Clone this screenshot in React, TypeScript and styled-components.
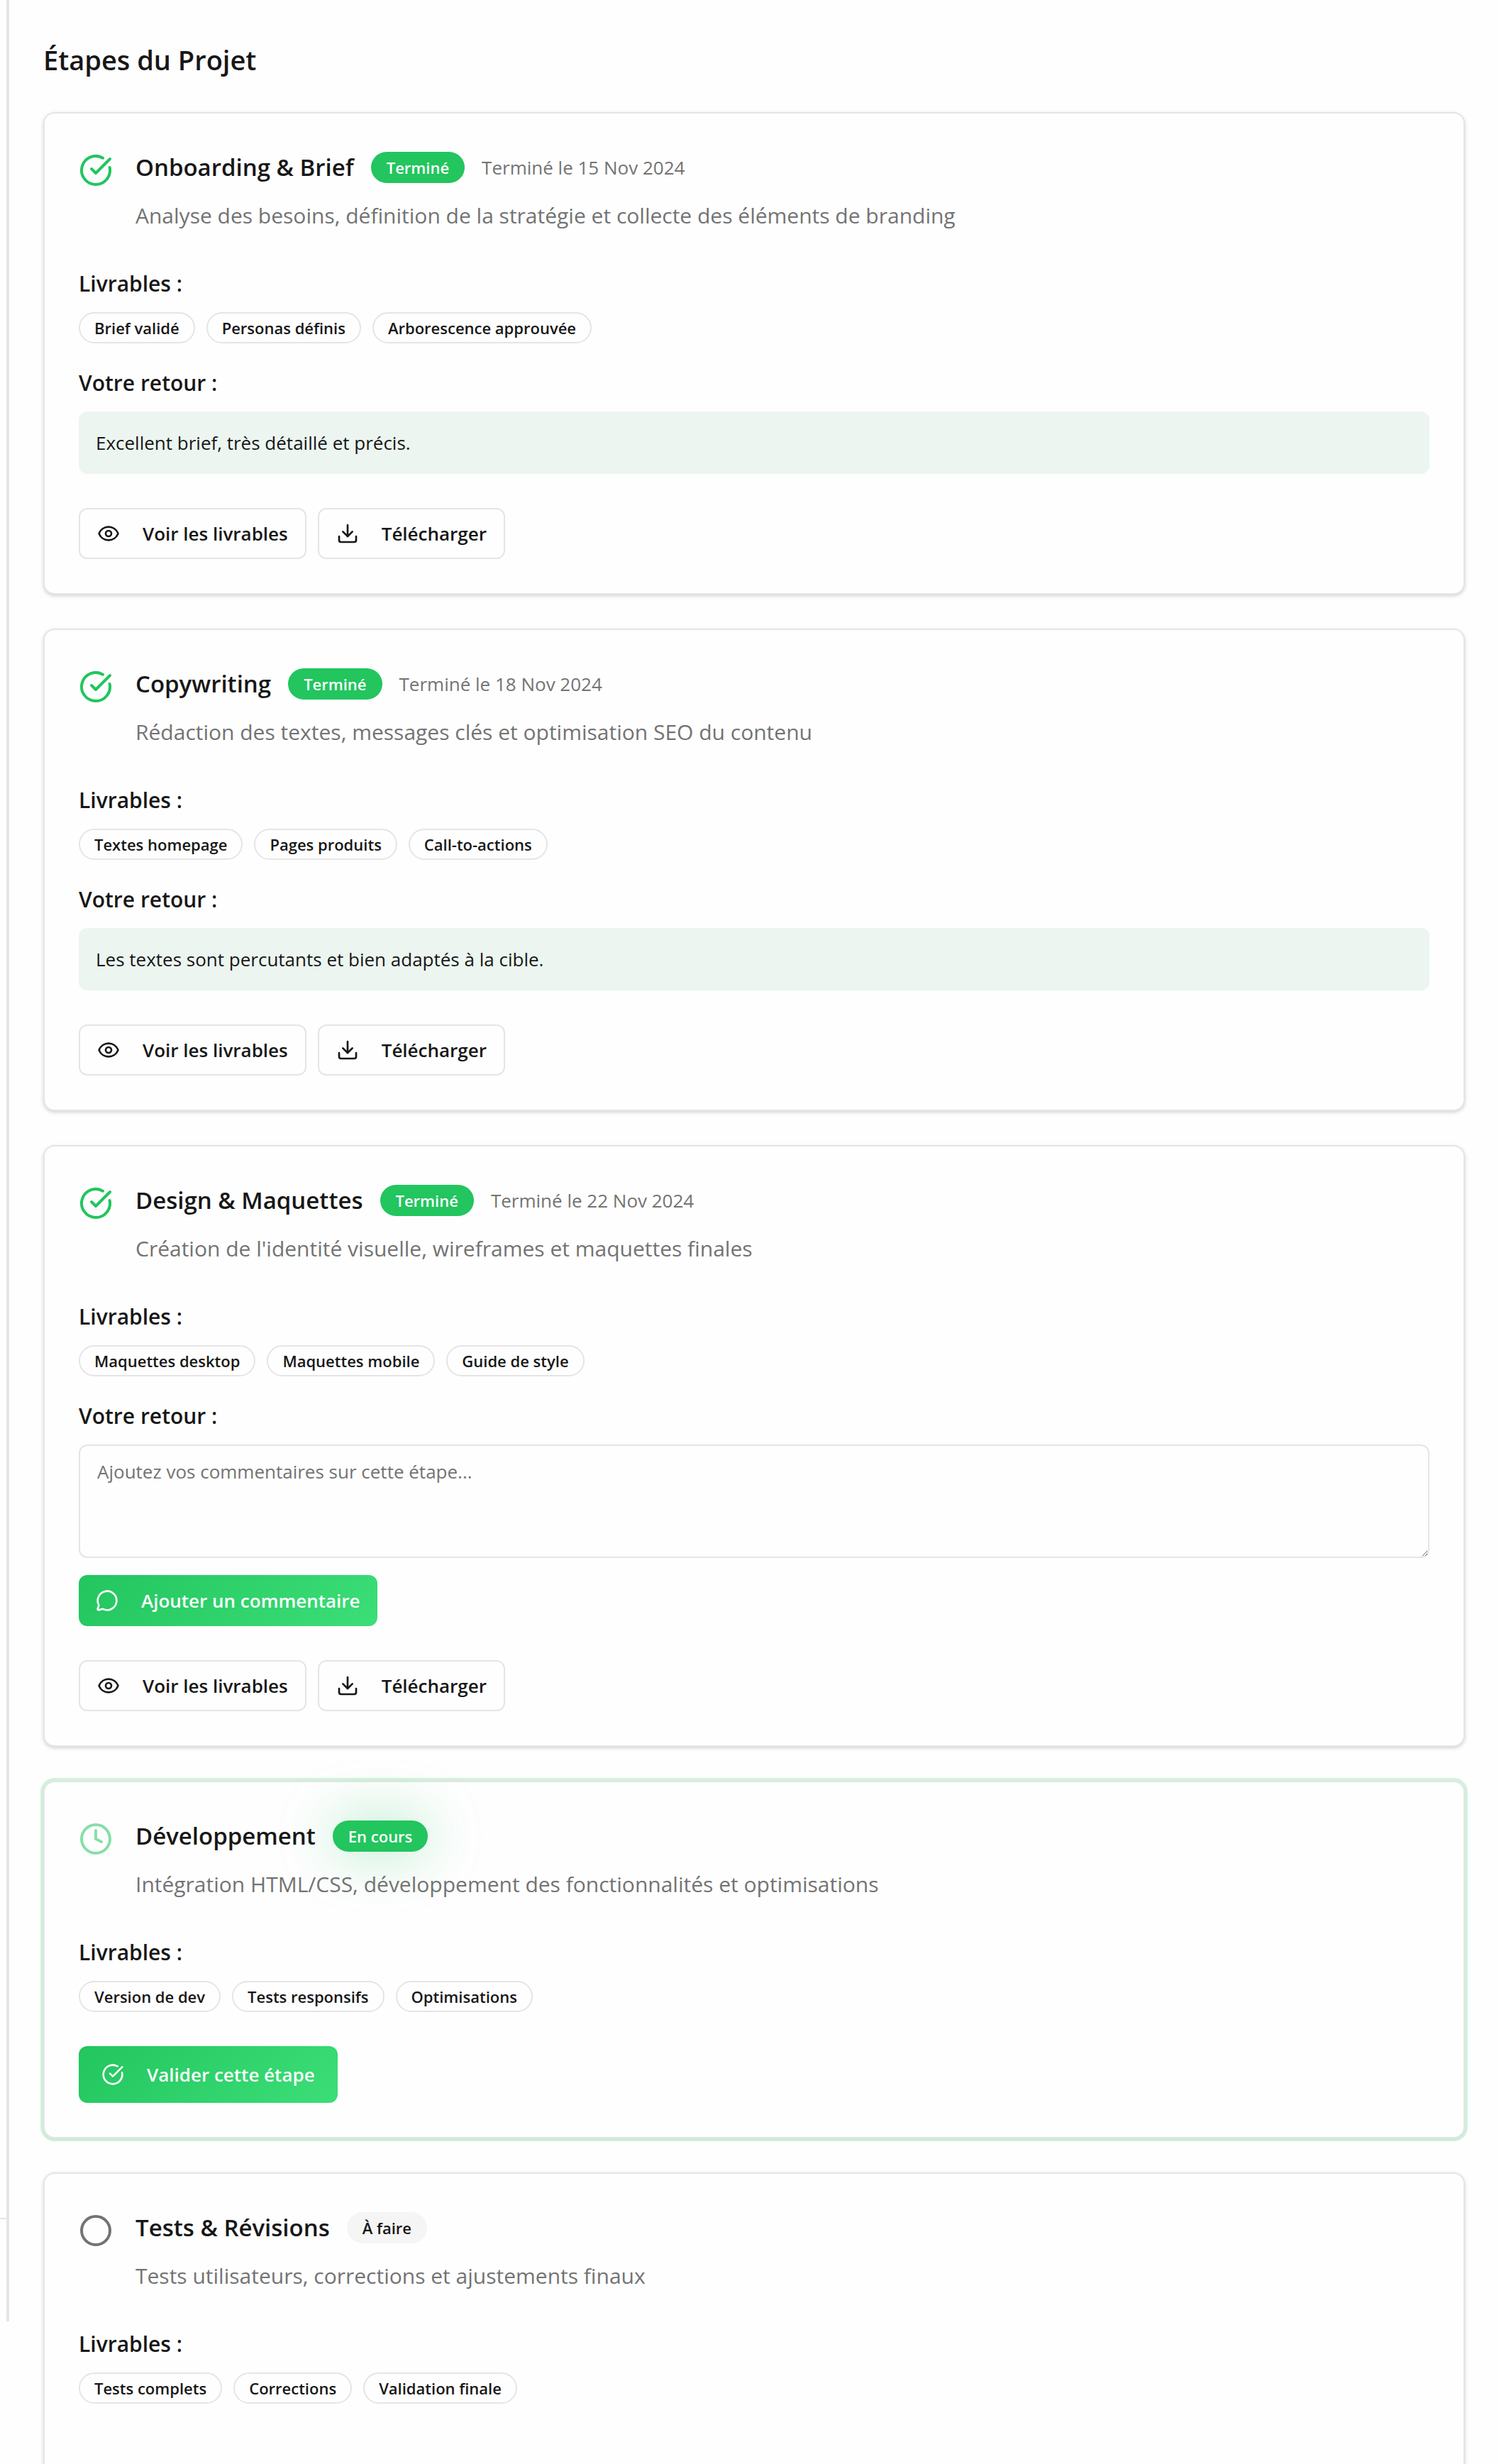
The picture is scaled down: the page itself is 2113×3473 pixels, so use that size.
import React, { useId } from "react";
import styled, { createGlobalStyle, css } from "styled-components";
import { Circle, CircleCheckBig, Clock, Download, Eye, MessageCircle } from "lucide-react";

const GlobalStyle = createGlobalStyle`
  *, *::before, *::after { box-sizing: border-box; }
  body {
    margin: 0;
    background: #fefefe;
    color: #171717;
    font-family: "Segoe UI", "Open Sans", "Noto Sans", sans-serif;
    font-size: 30px;
    line-height: 48px;
  }
  h2, h3, h4, p, ul { margin: 0; padding: 0; }
  button, textarea { font-family: inherit; }
`;

const Shell = styled.div`
  display: flex;
  height: 100vh;
  overflow-y: auto;
  scrollbar-width: none;
`;

const Sidebar = styled.aside`
  display: flex;
  flex-direction: column;
  justify-content: flex-end;
  flex: none;
  width: 13px;
  height: calc(100% - 201px);
  border-right: 4px solid #e5e5e5;
`;

const SidebarFooter = styled.div`
  height: 146px;
  border-top: 2px solid #e5e5e5;
`;

const Main = styled.main`
  flex: 1;
  min-width: 0;
  padding: 56px 48px 48px;
`;

const PageTitle = styled.h2`
  margin-bottom: 46px;
  font-size: 38px;
  font-weight: 600;
  line-height: 56px;
`;

const StepList = styled.div`
  display: flex;
  flex-direction: column;
  gap: 48px;
  padding-bottom: 48px;
`;

const Card = styled.article<{ $active: boolean }>`
  padding: 48px;
  border: 2px solid #e5e5e5;
  border-radius: 16px;
  background: #fefefe;
  box-shadow: ${(p) =>
    p.$active
      ? "0 0 0 4px rgba(34, 197, 94, 0.2), 0 2px 4px rgba(0, 0, 0, 0.05)"
      : "0 2px 6px rgba(0, 0, 0, 0.1), 0 2px 4px rgba(0, 0, 0, 0.08)"};
`;

const CardHeader = styled.header`
  display: flex;
  align-items: flex-start;
  gap: 32px;
  margin-bottom: 48px;
`;

const StatusIcon = styled.span<{ $color: string }>`
  display: flex;
  padding-top: 8px;
  color: ${(p) => p.$color};
`;

const TitleRow = styled.div`
  display: flex;
  align-items: center;
  gap: 24px;
  margin-bottom: 16px;
`;

const StepTitle = styled.h3`
  font-size: 33px;
  font-weight: 600;
  line-height: 56px;
`;

const StepDate = styled.span`
  color: #737373;
  font-size: 26px;
  line-height: 40px;
`;

const Description = styled.p`
  color: #737373;
`;

const pill = css`
  display: inline-flex;
  align-items: center;
  padding: 4px 20px;
  border: 2px solid transparent;
  border-radius: 22px;
  font-size: 22px;
  font-weight: 600;
  line-height: 32px;
  white-space: nowrap;
`;

const Badge = styled.span<{ $status: Status }>`
  ${pill}
  background: ${(p) => (p.$status === "todo" ? "#f5f5f5" : "#22c55e")};
  background-clip: border-box;
  color: ${(p) => (p.$status === "todo" ? "#171717" : "#fefefe")};
  box-shadow: ${(p) => (p.$status === "active" ? "0 0 80px rgba(34, 197, 94, 0.4)" : "none")};
`;

const Tag = styled.li`
  ${pill}
  border-color: #e5e5e5;
`;

const TagList = styled.ul`
  display: flex;
  flex-wrap: wrap;
  gap: 16px;
  list-style: none;
`;

const Section = styled.section`
  display: flex;
  flex-direction: column;
  gap: 16px;
  & + & { margin-top: 32px; }
`;

const SectionTitle = styled.h4`
  font-size: 30px;
  font-weight: 600;
  line-height: 48px;
`;

const Feedback = styled.p`
  padding: 24px;
  border-radius: 12px;
  background: #ecf5f0;
  font-size: 26px;
  line-height: 40px;
`;

const CommentForm = styled.form`
  display: flex;
  flex-direction: column;
  align-items: flex-start;
  gap: 24px;
`;

const CommentBox = styled.textarea`
  display: block;
  width: 100%;
  height: 160px;
  padding: 16px 24px;
  border: 2px solid #e5e5e5;
  border-radius: 12px;
  background: #fefefe;
  color: #171717;
  font-size: 26px;
  line-height: 40px;
  resize: vertical;
  &::placeholder { color: #737373; }
`;

const Actions = styled.div`
  display: flex;
  gap: 16px;
  margin-top: 48px;
`;

const buttonBase = css`
  display: inline-flex;
  align-items: center;
  gap: 32px;
  border-radius: 12px;
  font-size: 26px;
  font-weight: 600;
  line-height: 40px;
  white-space: nowrap;
  cursor: pointer;
`;

const OutlineButton = styled.button`
  ${buttonBase}
  height: 72px;
  padding: 0 24px;
  border: 2px solid #e5e5e5;
  background: #fefefe;
  color: #171717;
`;

const PrimaryButton = styled.button<{ $large?: boolean }>`
  ${buttonBase}
  height: ${(p) => (p.$large ? 80 : 72)}px;
  padding: 0 ${(p) => (p.$large ? 32 : 24)}px;
  border: 0;
  background: linear-gradient(135deg, #22c55e, #3bde77);
  color: #fefefe;
`;

type Status = "done" | "active" | "todo";

interface Step {
  title: string;
  status: Status;
  date?: string;
  description: string;
  deliverables: string[];
  feedback?: string;
}

const steps: Step[] = [
  {
    title: "Onboarding & Brief",
    status: "done",
    date: "15 Nov 2024",
    description: "Analyse des besoins, définition de la stratégie et collecte des éléments de branding",
    deliverables: ["Brief validé", "Personas définis", "Arborescence approuvée"],
    feedback: "Excellent brief, très détaillé et précis.",
  },
  {
    title: "Copywriting",
    status: "done",
    date: "18 Nov 2024",
    description: "Rédaction des textes, messages clés et optimisation SEO du contenu",
    deliverables: ["Textes homepage", "Pages produits", "Call-to-actions"],
    feedback: "Les textes sont percutants et bien adaptés à la cible.",
  },
  {
    title: "Design & Maquettes",
    status: "done",
    date: "22 Nov 2024",
    description: "Création de l'identité visuelle, wireframes et maquettes finales",
    deliverables: ["Maquettes desktop", "Maquettes mobile", "Guide de style"],
  },
  {
    title: "Développement",
    status: "active",
    description: "Intégration HTML/CSS, développement des fonctionnalités et optimisations",
    deliverables: ["Version de dev", "Tests responsifs", "Optimisations"],
  },
  {
    title: "Tests & Révisions",
    status: "todo",
    description: "Tests utilisateurs, corrections et ajustements finaux",
    deliverables: ["Tests complets", "Corrections", "Validation finale"],
  },
];

const statuses = {
  done: { label: "Terminé", color: "#22c55e", Icon: CircleCheckBig },
  active: { label: "En cours", color: "#86dfa7", Icon: Clock },
  todo: { label: "À faire", color: "#737373", Icon: Circle },
};

function StepCard({ step }: { step: Step }) {
  const commentId = useId();
  const { label, color, Icon } = statuses[step.status];

  return (
    <Card $active={step.status === "active"}>
      <CardHeader>
        <StatusIcon $color={color}>
          <Icon size={48} aria-hidden />
        </StatusIcon>
        <div>
          <TitleRow>
            <StepTitle>{step.title}</StepTitle>
            <Badge $status={step.status}>{label}</Badge>
            {step.date && <StepDate>Terminé le {step.date}</StepDate>}
          </TitleRow>
          <Description>{step.description}</Description>
        </div>
      </CardHeader>

      <Section>
        <SectionTitle>Livrables :</SectionTitle>
        <TagList>
          {step.deliverables.map((item) => (
            <Tag key={item}>{item}</Tag>
          ))}
        </TagList>
      </Section>

      {step.status === "done" && (
        <Section>
          <SectionTitle>
            {step.feedback ? "Votre retour :" : <label htmlFor={commentId}>Votre retour :</label>}
          </SectionTitle>
          {step.feedback ? (
            <Feedback>{step.feedback}</Feedback>
          ) : (
            <CommentForm onSubmit={(e) => e.preventDefault()}>
              <CommentBox id={commentId} placeholder="Ajoutez vos commentaires sur cette étape..." />
              <PrimaryButton type="submit">
                <MessageCircle size={32} aria-hidden />
                Ajouter un commentaire
              </PrimaryButton>
            </CommentForm>
          )}
        </Section>
      )}

      <Actions>
        {step.status === "done" && (
          <>
            <OutlineButton type="button">
              <Eye size={32} aria-hidden />
              Voir les livrables
            </OutlineButton>
            <OutlineButton type="button">
              <Download size={32} aria-hidden />
              Télécharger
            </OutlineButton>
          </>
        )}
        {step.status === "active" && (
          <PrimaryButton type="button" $large>
            <CircleCheckBig size={32} aria-hidden />
            Valider cette étape
          </PrimaryButton>
        )}
      </Actions>
    </Card>
  );
}

export default function App() {
  return (
    <>
      <GlobalStyle />
      <Shell>
        <Sidebar>
          <SidebarFooter />
        </Sidebar>
        <Main>
          <PageTitle>Étapes du Projet</PageTitle>
          <StepList>
            {steps.map((step) => (
              <StepCard key={step.title} step={step} />
            ))}
          </StepList>
        </Main>
      </Shell>
    </>
  );
}
